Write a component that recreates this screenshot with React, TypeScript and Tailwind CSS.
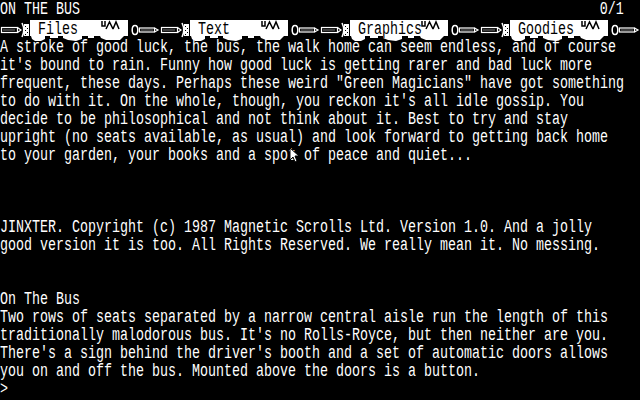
import type { ReactNode } from "react";

const menus = ["Files", "Text", "Graphics", "Goodies"];

const story = [
  "A stroke of good luck, the bus, the walk home can seem endless, and of course",
  "it's bound to rain. Funny how good luck is getting rarer and bad luck more",
  "frequent, these days. Perhaps these weird \"Green Magicians\" have got something",
  "to do with it. On the whole, though, you reckon it's all idle gossip. You",
  "decide to be philosophical and not think about it. Best to try and stay",
  "upright (no seats available, as usual) and look forward to getting back home",
  "to your garden, your books and a spot of peace and quiet...",
  "",
  "",
  "",
  "JINXTER. Copyright (c) 1987 Magnetic Scrolls Ltd. Version 1.0. And a jolly",
  "good version it is too. All Rights Reserved. We really mean it. No messing.",
  "",
  "",
  "On The Bus",
  "Two rows of seats separated by a narrow central aisle run the length of this",
  "traditionally malodorous bus. It's no Rolls-Royce, but then neither are you.",
  "There's a sign behind the driver's booth and a set of automatic doors allows",
  "you on and off the bus. Mounted above the doors is a button.",
  ">",
];

// 8px character cells: 18px Liberation Mono squeezed sideways
function Mono({ children, className = "" }: { children: ReactNode; className?: string }) {
  return (
    <div
      className={`w-[864px] origin-top-left scale-x-[0.7407] whitespace-pre font-['Liberation_Mono',monospace] text-[18px] leading-[18px] ${className}`}
    >
      {children}
    </div>
  );
}

function SwordBar() {
  return (
    <svg
      className="pointer-events-none absolute left-0 top-0 overflow-visible"
      width="160"
      height="26"
      viewBox="0 0 160 26"
    >
      {/* left hilt */}
      <rect x="1.5" y="9.5" width="16" height="5" fill="none" stroke="#fff" strokeWidth="1.2" />
      <line x1="3.5" y1="12" x2="15.5" y2="12" stroke="#fff" strokeDasharray="1 1" />
      <path d="M17.5 9.5 L21 12 L17.5 14.5" fill="none" stroke="#fff" strokeWidth="1.2" />
      <path d="M22 5 Q25.5 12 22 19" fill="none" stroke="#fff" strokeWidth="1.5" />
      <rect x="24" y="6" width="5" height="12" fill="#fff" />
      <rect x="25" y="8" width="1" height="1" fill="#000" />
      <rect x="27" y="10" width="1" height="1" fill="#000" />
      <rect x="25" y="12" width="1" height="1" fill="#000" />
      <rect x="27" y="14" width="1" height="1" fill="#000" />
      <rect x="25" y="16" width="1" height="1" fill="#000" />

      {/* label plate with ragged edge */}
      <rect x="30" y="2" width="98" height="16" fill="#fff" />
      <path d="M31 18 H45 V21 L41 23 H35 L32 21 Z" fill="#fff" />
      <path d="M50 18 H58 V20 H50 Z" fill="#fff" />
      <path d="M63 18 H82 V21 L76 23 L68 22 L63 20 Z" fill="#fff" />
      <path d="M88 18 H94 V20 H88 Z" fill="#fff" />
      <path d="M100 18 H124 L120 22 H106 L101 20 Z" fill="#fff" />
      <path
        d="M102 3 V8 H105 V3 M106 11 L109.5 4 L113 11 M113 11 L116 4 L119 11"
        fill="none"
        stroke="#000"
        strokeWidth="1.5"
      />

      {/* right blade */}
      <ellipse cx="135" cy="12" rx="2.8" ry="4.5" fill="none" stroke="#fff" strokeWidth="1.5" />
      <rect x="139.5" y="10" width="15" height="4" fill="none" stroke="#fff" strokeWidth="1.2" />
      <line x1="141.5" y1="12" x2="153" y2="12" stroke="#fff" strokeDasharray="1 1" />
      <path d="M154.5 10 L158 12 L154.5 14" fill="none" stroke="#fff" strokeWidth="1.2" />
    </svg>
  );
}

export default function App() {
  return (
    <div className="relative h-[400px] w-[640px] overflow-hidden bg-black text-white">
      <Mono className="flex justify-between pr-[22px]">
        <span>ON THE BUS</span>
        <span>0/1</span>
      </Mono>

      <nav className="relative z-10 flex h-5">
        {menus.map((m) => (
          <div key={m} className="relative h-5 w-40">
            <SwordBar />
            <span className="absolute left-[38px] top-[2px] inline-block origin-top-left scale-x-[0.7407] whitespace-pre font-['Liberation_Mono',monospace] text-[18px] leading-[18px] text-black">
              {m}
            </span>
          </div>
        ))}
      </nav>

      <Mono>
        {story.map((line, i) => (
          <div key={i} className="h-[18px]">
            {line}
          </div>
        ))}
      </Mono>

      {/* mouse pointer */}
      <svg className="absolute left-[289px] top-[147px]" width="11" height="16" viewBox="0 0 11 16">
        <path d="M1 1 L1 13 L4 10 L6 15 L8 14 L6 9 L10 9 Z" fill="#fff" stroke="#000" strokeWidth="1" />
      </svg>
    </div>
  );
}
